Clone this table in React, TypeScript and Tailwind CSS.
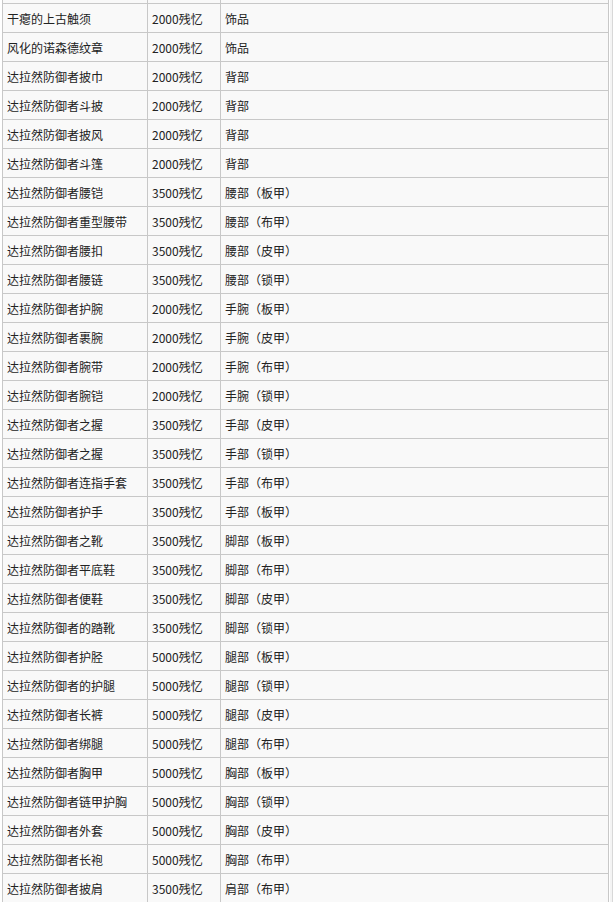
const rows: [string, string, string][] = [
  ["干瘪的上古触须", "2000残忆", "饰品"],
  ["风化的诺森德纹章", "2000残忆", "饰品"],
  ["达拉然防御者披巾", "2000残忆", "背部"],
  ["达拉然防御者斗披", "2000残忆", "背部"],
  ["达拉然防御者披风", "2000残忆", "背部"],
  ["达拉然防御者斗篷", "2000残忆", "背部"],
  ["达拉然防御者腰铠", "3500残忆", "腰部（板甲）"],
  ["达拉然防御者重型腰带", "3500残忆", "腰部（布甲）"],
  ["达拉然防御者腰扣", "3500残忆", "腰部（皮甲）"],
  ["达拉然防御者腰链", "3500残忆", "腰部（锁甲）"],
  ["达拉然防御者护腕", "2000残忆", "手腕（板甲）"],
  ["达拉然防御者裹腕", "2000残忆", "手腕（皮甲）"],
  ["达拉然防御者腕带", "2000残忆", "手腕（布甲）"],
  ["达拉然防御者腕铠", "2000残忆", "手腕（锁甲）"],
  ["达拉然防御者之握", "3500残忆", "手部（皮甲）"],
  ["达拉然防御者之握", "3500残忆", "手部（锁甲）"],
  ["达拉然防御者连指手套", "3500残忆", "手部（布甲）"],
  ["达拉然防御者护手", "3500残忆", "手部（板甲）"],
  ["达拉然防御者之靴", "3500残忆", "脚部（板甲）"],
  ["达拉然防御者平底鞋", "3500残忆", "脚部（布甲）"],
  ["达拉然防御者便鞋", "3500残忆", "脚部（皮甲）"],
  ["达拉然防御者的踏靴", "3500残忆", "脚部（锁甲）"],
  ["达拉然防御者护胫", "5000残忆", "腿部（板甲）"],
  ["达拉然防御者的护腿", "5000残忆", "腿部（锁甲）"],
  ["达拉然防御者长裤", "5000残忆", "腿部（皮甲）"],
  ["达拉然防御者绑腿", "5000残忆", "腿部（布甲）"],
  ["达拉然防御者胸甲", "5000残忆", "胸部（板甲）"],
  ["达拉然防御者链甲护胸", "5000残忆", "胸部（锁甲）"],
  ["达拉然防御者外套", "5000残忆", "胸部（皮甲）"],
  ["达拉然防御者长袍", "5000残忆", "胸部（布甲）"],
  ["达拉然防御者披肩", "3500残忆", "肩部（布甲）"],
];

const cell = "h-[29px] border-r border-b border-[#c8c8c8] pl-1 pt-[2px] flex items-center whitespace-nowrap overflow-hidden";

export default function App() {
  return (
    <div
      className="w-[613px] h-[902px] overflow-hidden bg-white flex text-[12px] text-[#222]"
      style={{ fontFamily: '"Noto Sans CJK SC", "Noto Sans", sans-serif' }}
    >
      <div className="ml-[2px] w-[607px] -mt-[25px] border-l border-[#c8c8c8] bg-[#f9f9f9] grid grid-cols-[145px_73px_388px] content-start">
        <div className={cell}></div>
        <div className={cell}></div>
        <div className={cell}></div>
        {rows.map((r, i) => (
          <div key={i} className="contents">
            <div className={cell}>{r[0]}</div>
            <div className={cell}>{r[1]}</div>
            <div className={cell}>{r[2]}</div>
          </div>
        ))}
      </div>
      <div className="w-[4px] bg-[#f4f4f4] border-r border-[#d8d8d8] ml-[1px]"></div>
    </div>
  );
}
